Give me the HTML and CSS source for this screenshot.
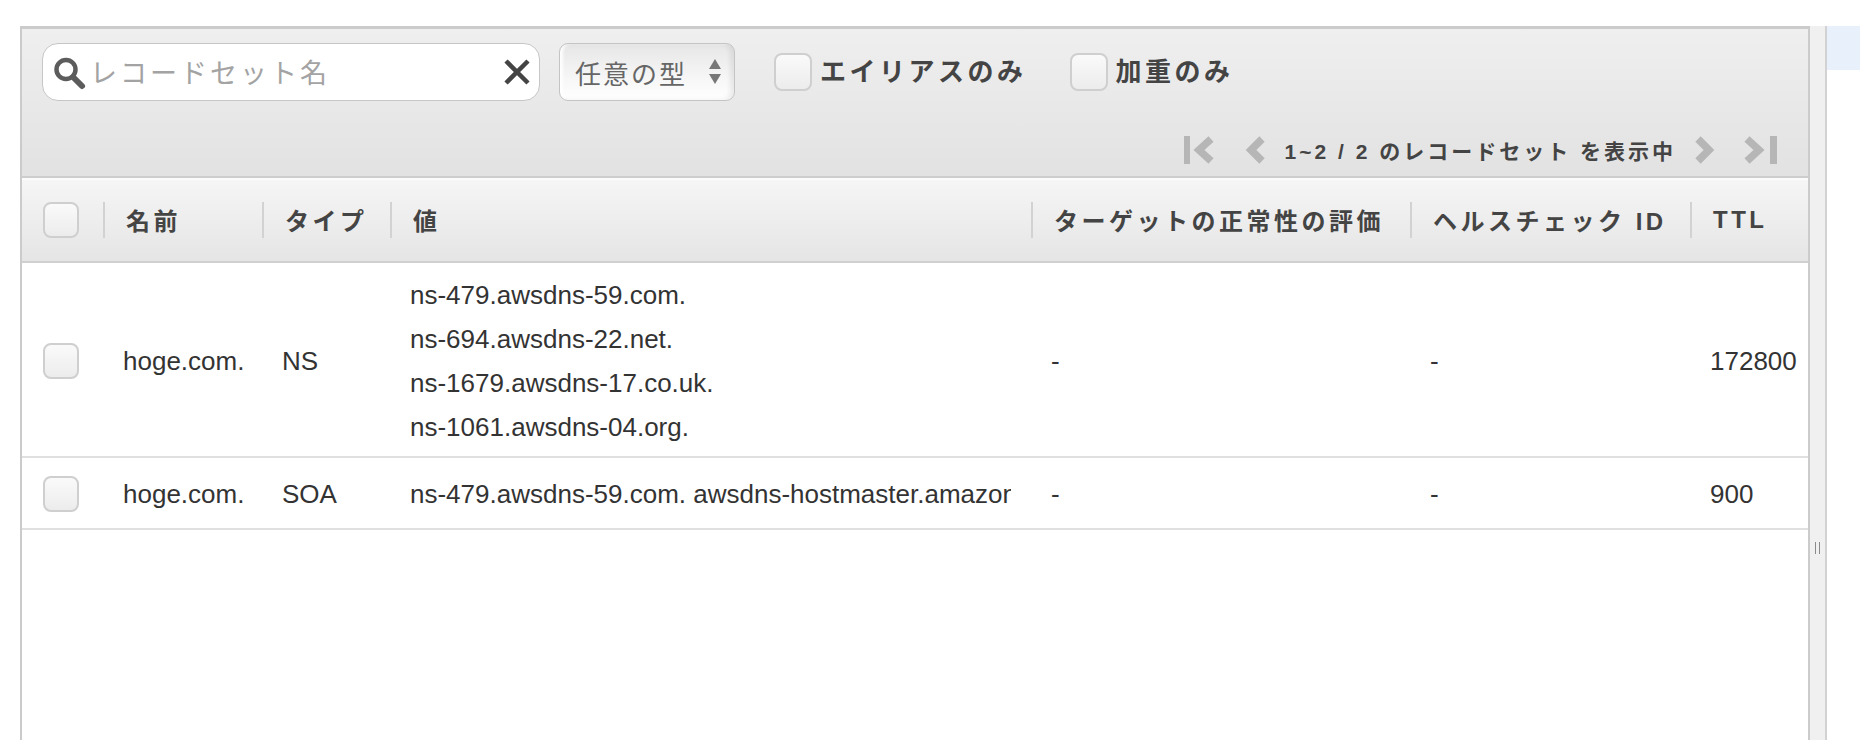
FILE: index.html
```html
<!DOCTYPE html>
<html lang="ja">
<head>
<meta charset="utf-8">
<title>レコードセット</title>
<link rel="stylesheet" href="styles.css">
</head>
<body>
<div class="page">
  <section class="panel">
    <div class="toolbar">
      <div class="filters">
        <div class="search">
          <svg class="search-icon" width="34" height="34" viewBox="0 0 34 34"><circle cx="13" cy="12.5" r="9.5" fill="none" stroke="#5c5c5c" stroke-width="4.5"/><line x1="20" y1="20" x2="29" y2="29" stroke="#5c5c5c" stroke-width="6" stroke-linecap="round"/></svg>
          <span class="placeholder">レコードセット名</span>
          <svg class="clear" width="30" height="30" viewBox="0 0 30 30"><path d="M4 4 L26 26 M26 4 L4 26" stroke="#444" stroke-width="4.5" fill="none"/></svg>
        </div>
        <div class="select">
          <span class="select-text">任意の型</span>
          <svg width="14" height="26" viewBox="0 0 14 26"><polygon points="7,0 13,10 1,10" fill="#777"/><polygon points="1,15 13,15 7,25" fill="#777"/></svg>
        </div>
        <label class="check"><span class="box"></span><span class="check-label">エイリアスのみ</span></label>
        <label class="check check-second"><span class="box"></span><span class="check-label">加重のみ</span></label>
      </div>
      <div class="pager">
        <svg class="pg-first" width="31" height="28" viewBox="0 0 31 28"><rect x="0" y="0" width="6" height="28" fill="#b6b6b6"/><polyline points="27,3 15,14 27,25" fill="none" stroke="#b6b6b6" stroke-width="7.5"/></svg>
        <svg class="pg-prev" width="21" height="28" viewBox="0 0 21 28"><polyline points="17,3 6,14 17,25" fill="none" stroke="#b6b6b6" stroke-width="7.5"/></svg>
        <span class="pg-text">1~2 / 2 のレコードセット を表示中</span>
        <svg class="pg-next" width="21" height="28" viewBox="0 0 21 28"><polyline points="4,3 15,14 4,25" fill="none" stroke="#b6b6b6" stroke-width="7.5"/></svg>
        <svg class="pg-last" width="34" height="28" viewBox="0 0 34 28"><polyline points="4,3 16,14 4,25" fill="none" stroke="#b6b6b6" stroke-width="7.5"/><rect x="27" y="0" width="7" height="28" fill="#b6b6b6"/></svg>
      </div>
    </div>
    <table class="records">
      <colgroup>
        <col class="c-cb"><col class="c-name"><col class="c-type"><col class="c-value"><col class="c-health"><col class="c-hcid"><col class="c-ttl">
      </colgroup>
      <thead>
        <tr>
          <th class="cb"><span class="box"></span></th>
          <th><div class="h">名前</div></th>
          <th><div class="h">タイプ</div></th>
          <th><div class="h">値</div></th>
          <th><div class="h">ターゲットの正常性の評価</div></th>
          <th><div class="h">ヘルスチェック ID</div></th>
          <th><div class="h">TTL</div></th>
        </tr>
      </thead>
      <tbody>
        <tr>
          <td class="cb"><span class="box"></span></td>
          <td>hoge.com.</td>
          <td>NS</td>
          <td class="multi">ns-479.awsdns-59.com.<br>ns-694.awsdns-22.net.<br>ns-1679.awsdns-17.co.uk.<br>ns-1061.awsdns-04.org.</td>
          <td>-</td>
          <td>-</td>
          <td>172800</td>
        </tr>
        <tr>
          <td class="cb"><span class="box"></span></td>
          <td>hoge.com.</td>
          <td>SOA</td>
          <td><div class="clip">ns-479.awsdns-59.com. awsdns-hostmaster.amazon.com. 1 7200 900 1209600 86400</div></td>
          <td>-</td>
          <td>-</td>
          <td>900</td>
        </tr>
      </tbody>
    </table>
  </section>
  <div class="splitter"><span class="grip"></span></div>
  <div class="side"><div class="side-bar"></div></div>
</div>
</body>
</html>
```

FILE: styles.css
```css
html, body {
  margin: 0;
  padding: 0;
  background: #fff;
}

body {
  font-family: "Liberation Sans", "Noto Sans CJK JP", sans-serif;
  color: #333;
}

.page {
  display: flex;
  height: 740px;
  box-sizing: border-box;
  padding: 26px 0 0 20px;
  overflow: hidden;
}

.panel {
  flex: none;
  width: 1790px;
  box-sizing: border-box;
  border: 2px solid #cbcbcb;
  border-top-width: 3px;
  border-bottom: none;
  background: #fff;
}

/* toolbar */
.toolbar {
  background: linear-gradient(#efefef, #e2e2e2);
  border-bottom: 2px solid #cdcdcd;
  padding: 14px 31px 12px 20px;
}

.filters {
  display: flex;
  align-items: center;
  height: 58px;
}

.search {
  width: 498px;
  height: 58px;
  box-sizing: border-box;
  border: 1px solid #c6c6c6;
  border-radius: 16px;
  background: #fff;
  display: flex;
  align-items: center;
  padding: 0 7px 0 10px;
}

.search-icon {
  flex: none;
  margin-top: 4px;
  margin-right: 3px;
}

.placeholder {
  flex: 1;
  font-family: "Noto Sans CJK JP", sans-serif;
  font-size: 27px;
  letter-spacing: 3px;
  color: #a3a3a3;
  white-space: nowrap;
  padding-bottom: 2px;
}

.clear {
  flex: none;
}

.select {
  margin-left: 19px;
  width: 176px;
  height: 58px;
  box-sizing: border-box;
  border: 1px solid #c4c4c4;
  border-radius: 9px;
  background: linear-gradient(#e6e6e6, #f5f5f5 55%, #ffffff);
  box-shadow: inset -4px 0 5px rgba(0, 0, 0, 0.07), inset 3px 0 3px rgba(255, 255, 255, 0.9);
  display: flex;
  align-items: center;
  justify-content: space-between;
  padding: 0 12px 0 15px;
}

.select-text {
  font-family: "Noto Sans CJK JP", sans-serif;
  font-size: 26px;
  letter-spacing: 2px;
  color: #666;
  white-space: nowrap;
}

.check {
  display: flex;
  align-items: center;
  margin-left: 39px;
}

.check-second {
  margin-left: 43px;
}

.box {
  display: block;
  width: 36px;
  height: 36px;
  box-sizing: border-box;
  border: 2px solid #cfcfcf;
  border-radius: 8px;
  background: linear-gradient(#fafafa, #ececec);
}

.check .box {
  width: 38px;
  height: 38px;
  margin-right: 8px;
}

.check-label {
  font-family: "Liberation Sans", "Noto Sans CJK JP", sans-serif;
  font-weight: bold;
  font-size: 26px;
  letter-spacing: 3.5px;
  color: #444;
  white-space: nowrap;
  padding-bottom: 6px;
}

.pager {
  display: flex;
  justify-content: flex-end;
  align-items: center;
  height: 28px;
  margin-top: 35px;
}

.pg-prev { margin-left: 30px; }
.pg-text {
  margin-left: 19px;
  font-weight: bold;
  font-size: 21px;
  letter-spacing: 3px;
  color: #444;
  white-space: nowrap;
}
.pg-next { margin-left: 18px; }
.pg-last { margin-left: 28px; }

/* table */
.records {
  width: 1786px;
  table-layout: fixed;
  border-collapse: collapse;
}

.c-cb { width: 81px; }
.c-name { width: 159px; }
.c-type { width: 128px; }
.c-value { width: 641px; }
.c-health { width: 379px; }
.c-hcid { width: 280px; }
.c-ttl { width: 118px; }

thead th {
  height: 83px;
  padding: 0;
  text-align: left;
  background: linear-gradient(#f6f6f6, #e5e5e5);
  border-bottom: 2px solid #d0d0d0;
  box-shadow: inset 0 2px 0 #fbfbfb;
}

th.cb {
  padding-left: 21px;
}

.h {
  display: flex;
  align-items: center;
  height: 36px;
  border-left: 2px solid #d2d2d2;
  padding-left: 21px;
  font-weight: bold;
  font-size: 24px;
  letter-spacing: 3.5px;
  color: #444;
  white-space: nowrap;
}

tbody td {
  padding: 14px 20px 12px;
  line-height: 44px;
  font-size: 26px;
  color: #333;
  border-bottom: 2px solid #e0e0e0;
  vertical-align: middle;
  white-space: nowrap;
  overflow: hidden;
}

tbody td.cb {
  padding-left: 21px;
}

tbody td.multi {
  padding-top: 10px;
  padding-bottom: 7px;
}

.clip {
  overflow: hidden;
  white-space: nowrap;
}

/* splitter + side pane */
.splitter {
  flex: none;
  width: 15px;
  background: #f0f0f0;
  border-right: 2px solid #d2d2d2;
  display: flex;
  justify-content: center;
  padding-top: 516px;
  box-sizing: content-box;
}

.grip {
  display: block;
  width: 5px;
  height: 12px;
  border-left: 1px solid #8a8a8a;
  border-right: 1px solid #8a8a8a;
  box-sizing: border-box;
}

.side {
  flex: 1;
}

.side-bar {
  height: 44px;
  background: #e8f0fb;
}
```
